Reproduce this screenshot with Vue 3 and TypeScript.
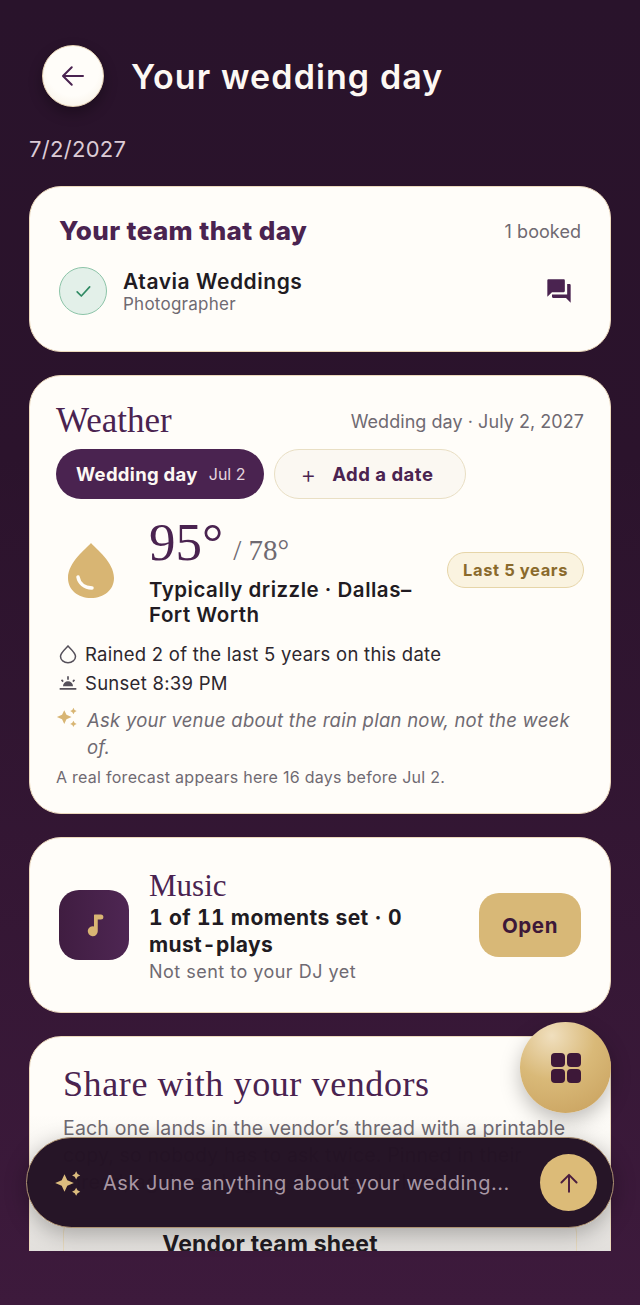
<script setup lang="ts">
const details = [
  { id: 'rain', text: 'Rained 2 of the last 5 years on this date' },
  { id: 'sunset', text: 'Sunset 8:39 PM' },
]
</script>

<template>
  <div class="page">
    <main class="scroller">
      <header class="top">
        <button class="back" aria-label="Back">
          <svg width="30" height="30" viewBox="0 0 24 24" fill="none" stroke="#4a2350" stroke-width="1.600" stroke-linecap="round" stroke-linejoin="round">
            <path d="M20 12H4.500M11 5l-7 7 7 7" />
          </svg>
        </button>
        <h1>Your wedding day</h1>
      </header>
      <p class="date">7/2/2027</p>

      <section class="card team">
        <div class="row-between">
          <h2>Your team that day</h2>
          <span class="muted booked">1 booked</span>
        </div>
        <div class="vendor">
          <span class="check">
            <svg width="20" height="20" viewBox="0 0 24 24" fill="none" stroke="#2f8a63" stroke-width="2" stroke-linecap="round" stroke-linejoin="round">
              <path d="M5 13l5 5L20 7" />
            </svg>
          </span>
          <div class="vendor-text">
            <strong>Atavia Weddings</strong>
            <span class="muted">Photographer</span>
          </div>
          <svg class="chat" width="28" height="28" viewBox="0 0 24 24" fill="#4a2350">
            <path d="M21 6h-2v9H6v2c0 .55.45 1 1 1h11l4 4V7c0-.55-.45-1-1-1zm-4 6V3c0-.55-.45-1-1-1H3c-.55 0-1 .45-1 1v14l4-4h10c.55 0 1-.45 1-1z" />
          </svg>
        </div>
      </section>

      <section class="card weather">
        <div class="row-between weather-head">
          <h3 class="serif">Weather</h3>
          <span class="muted when">Wedding day · July 2, 2027</span>
        </div>
        <div class="chips">
          <span class="chip active"><b>Wedding day</b><small>Jul 2</small></span>
          <span class="chip add"><i>+</i><b>Add a date</b></span>
        </div>
        <div class="forecast">
          <svg class="drop" width="60" height="60" viewBox="0 0 60 60">
            <path d="M30 3C25 9 7 22 7 38c0 12 10 20 23 20s23-8 23-20C53 22 35 9 30 3z" fill="#d8b573" />
            <path d="M17 37c1 6 6 10.500 14 11" fill="none" stroke="#fffdf9" stroke-width="3.500" stroke-linecap="round" />
          </svg>
          <div class="temps">
            <div class="temp-line"><span class="high serif">95°</span><span class="low serif">/ 78°</span></div>
            <p class="summary">Typically drizzle · Dallas–Fort Worth</p>
          </div>
          <span class="pill">Last 5 years</span>
        </div>
        <ul class="facts">
          <li v-for="d in details" :key="d.id">
            <svg v-if="d.id === 'rain'" width="20" height="20" viewBox="0 0 24 24" fill="none" stroke="#55505a" stroke-width="1.800">
              <path d="M12 2.500c-2 2.500-9 8-9 12.500a9 7.500 0 0 0 18 0c0-4.500-7-10-9-12.500z" />
            </svg>
            <svg v-else width="20" height="20" viewBox="0 0 24 24" fill="#55505a">
              <path d="M6 16a6 6 0 0 1 12 0zM2 18h20v2H2zM11 4h2v4h-2zM3.500 9l1.400-1.400 2 2L5.500 11zM20.500 9l-1.400-1.400-2 2 1.400 1.400z" />
            </svg>
            <span>{{ d.text }}</span>
          </li>
        </ul>
        <div class="tip">
          <svg width="22" height="22" viewBox="0 0 24 24" fill="#d8b573">
            <path d="M9 4.500l2.400 5.100L17 12l-5.600 2.400L9 19.500l-2.400-5.100L1 12l5.600-2.400zM19 2l1.200 2.300 2.300 1.200-2.300 1.200L19 9l-1.200-2.300-2.300-1.200 2.300-1.200zM19 16l1.200 2.300 2.300 1.200-2.300 1.200L19 23l-1.200-2.300-2.300-1.200 2.300-1.200z" />
          </svg>
          <em>Ask your venue about the rain plan now, not the week of.</em>
        </div>
        <p class="muted note">A real forecast appears here 16 days before Jul 2.</p>
      </section>

      <section class="card music">
        <span class="tile">
          <svg width="30" height="30" viewBox="0 0 24 24" fill="#d8b573">
            <path d="M12.500 3.500h5a2 2 0 0 1 0 4H15v9.500a4 4 0 1 1-3-3.900V4a.5.5 0 0 1 .5-.5z" />
          </svg>
        </span>
        <div class="music-text">
          <h3 class="serif">Music</h3>
          <strong>1 of 11 moments set · 0 must-plays</strong>
          <span class="muted">Not sent to your DJ yet</span>
        </div>
        <button class="open">Open</button>
      </section>

      <section class="card share">
        <h3 class="serif">Share with your vendors</h3>
        <p>Each one lands in the vendor’s thread with a printable copy, so nobody has to ask twice. Pinned in their thread, again and again, for the whole team.</p>
        <div class="sheet">Vendor team sheet</div>
      </section>
    </main>

    <button class="fab" aria-label="Menu">
      <span class="grid"><i /><i /><i /><i /></span>
    </button>

    <div class="ask">
      <svg width="28" height="28" viewBox="0 0 24 24" fill="#dcbc7e">
        <path d="M9 4.500l2.400 5.100L17 12l-5.600 2.400L9 19.500l-2.400-5.100L1 12l5.600-2.400zM19 2l1.200 2.300 2.300 1.200-2.300 1.200L19 9l-1.200-2.300-2.300-1.200 2.300-1.200zM19 16l1.200 2.300 2.300 1.200-2.300 1.200L19 23l-1.200-2.300-2.300-1.200 2.300-1.200z" />
      </svg>
      <span class="placeholder">Ask June anything about your wedding...</span>
      <button class="send" aria-label="Send">
        <svg width="26" height="26" viewBox="0 0 24 24" fill="none" stroke="#4a1d3f" stroke-width="1.800" stroke-linecap="round" stroke-linejoin="round">
          <path d="M12 20V4.500M5 11.500l7-7 7 7" />
        </svg>
      </button>
    </div>
  </div>
</template>

<style scoped>
.page {
  position: relative;
  width: 640px;
  height: 1305px;
  overflow: hidden;
  background: linear-gradient(180deg, #29132b 0%, #2b132c 35%, #3d1a3c 100%);
  font-family: Inter, "Liberation Sans", sans-serif;
  color: #211b22;
}

.scroller {
  height: 1251px;
  overflow: hidden;
  padding: 45px 29px 0;
  box-sizing: border-box;
}

.top {
  display: flex;
  align-items: center;
  gap: 28px;
  padding-left: 13px;
}

.back {
  width: 62px;
  height: 62px;
  border-radius: 50%;
  border: 1px solid #e8d6b8;
  background: radial-gradient(circle at 50% 40%, #fffdf9 55%, #f6eee0 100%);
  box-shadow: 0 6px 14px rgba(0, 0, 0, 0.3);
  display: flex;
  align-items: center;
  justify-content: center;
  padding: 0;
}

h1 {
  margin: 0 0 0 -1px;
  font-size: 34px;
  font-weight: 600;
  color: #fdf8f3;
  letter-spacing: 1.1px;
}

.date {
  margin: 27px 0 22px;
  font-size: 22px;
  line-height: 30px;
  color: #dccbd6;
  letter-spacing: 0.3px;
}

.card {
  background: #fffdf9;
  border: 1.500px solid #ecd9bd;
  border-radius: 32px;
  box-sizing: border-box;
  margin-bottom: 23px;
}

.muted {
  color: #6f6a72;
}

.serif {
  font-family: "Liberation Serif", "DejaVu Serif", serif;
  font-weight: 400;
  color: #4a2350;
  margin: 0;
}

.row-between {
  display: flex;
  align-items: center;
  justify-content: space-between;
}

.team {
  height: 166px;
  padding: 26px 29px 0;
}

h2 {
  margin: 0;
  font-size: 26px;
  font-weight: 800;
  color: #4a2350;
  line-height: 36px;
  letter-spacing: 0.4px;
}

.booked {
  font-size: 18px;
  letter-spacing: 0.05px;
}

.vendor {
  display: flex;
  align-items: center;
  margin-top: 18px;
}

.check {
  width: 48px;
  height: 48px;
  box-sizing: border-box;
  border-radius: 50%;
  border: 1px solid #8cc4a8;
  background: #e3f0e9;
  display: flex;
  align-items: center;
  justify-content: center;
  margin-right: 16px;
}

.vendor-text {
  display: flex;
  flex-direction: column;
  flex: 1;
}

.vendor-text strong {
  font-size: 21px;
  font-weight: 600;
  line-height: 25px;
  letter-spacing: 0.55px;
  padding-top: 2px;
}

.vendor-text .muted {
  font-size: 17px;
  line-height: 21px;
  letter-spacing: 0.25px;
}

.chat {
  margin-right: 8px;
}

.weather {
  height: 439px;
  padding: 22px 26px 0;
}

.weather-head h3 {
  font-size: 35px;
  line-height: 46px;
}

.when {
  font-size: 18px;
  letter-spacing: 0.05px;
}

.chips {
  display: flex;
  gap: 10px;
  margin-top: 5px;
}

.chip {
  height: 50px;
  box-sizing: border-box;
  border-radius: 25px;
  display: inline-flex;
  align-items: center;
  font-size: 18.500px;
}

.chip.active {
  background: #4a2350;
  color: #fdf8f3;
  padding: 0 19px 0 20px;
  gap: 11px;
}

.chip.active b {
  letter-spacing: 0.3px;
}

.chip.active small {
  font-size: 16px;
  color: #e4d6df;
}

.chip.add {
  background: #fbf8f2;
  border: 1px solid #e9dfc4;
  color: #4a2350;
  padding: 0 32px 0 25px;
  gap: 16px;
}

.chip.add b {
  letter-spacing: 0.5px;
}

.chip.add i {
  font-style: normal;
  font-size: 24px;
  font-weight: 300;
}

.chip b {
  font-weight: 700;
}

.forecast {
  display: flex;
  align-items: center;
  margin-top: 14px;
}

.drop {
  flex: none;
  margin: 0 28px 0 5px;
}

.temps {
  width: 280px;
}

.temp-line {
  display: flex;
  align-items: baseline;
  gap: 10px;
  height: 58px;
}

.high {
  font-size: 53px;
  line-height: 58px;
}

.low {
  font-size: 29px;
  color: #6f6a72;
}

.summary {
  margin: 6px 0 0;
  font-size: 20.500px;
  line-height: 25px;
  font-weight: 600;
  letter-spacing: 0.5px;
}

.pill {
  flex: none;
  margin: 0 0 0 auto;
  height: 36px;
  padding: 0 15px;
  box-sizing: border-box;
  border-radius: 18px;
  border: 1px solid #e6d5a8;
  background: #faf3e0;
  color: #8a6a2c;
  font-size: 16.500px;
  font-weight: 700;
  line-height: 34px;
  letter-spacing: 0.6px;
}

.facts {
  list-style: none;
  margin: 12px 0 0;
  padding: 0;
}

.facts li {
  display: flex;
  align-items: center;
  gap: 7px;
  height: 29px;
  font-size: 18.500px;
  color: #2d272e;
  letter-spacing: 0.27px;
  padding-left: 2px;
}

.tip {
  display: flex;
  gap: 9px;
  margin-top: 10px;
  font-size: 18.500px;
  line-height: 27px;
  color: #6f6a72;
  letter-spacing: 0.25px;
}

.tip svg {
  flex: none;
  margin-top: -1px;
}

.note {
  margin: 5px 0 0;
  font-size: 16px;
  line-height: 22px;
  letter-spacing: 0.27px;
}

.music {
  height: 176px;
  display: flex;
  align-items: center;
  padding: 0 29px;
}

.tile {
  flex: none;
  width: 70px;
  height: 70px;
  border-radius: 20px;
  background: linear-gradient(90deg, #401d41, #4e2653);
  display: flex;
  align-items: center;
  justify-content: center;
  margin-right: 20px;
}

.music-text {
  flex: 1;
  display: flex;
  flex-direction: column;
  padding-top: 4px;
}

.music-text h3 {
  font-size: 31px;
  line-height: 36px;
}

.music-text strong {
  font-size: 21px;
  line-height: 27px;
  font-weight: 700;
  font-feature-settings: "tnum";
  letter-spacing: 0.37px;
  padding-right: 18px;
}

.music-text .muted {
  font-size: 18px;
  line-height: 28px;
  letter-spacing: 0.48px;
}

.open {
  flex: none;
  width: 102px;
  height: 64px;
  border: 0;
  border-radius: 20px;
  background: #d8b877;
  color: #3d1838;
  font-family: inherit;
  font-size: 20.500px;
  font-weight: 700;
  letter-spacing: 0.6px;
  margin-left: 18px;
}

.share {
  padding: 26px 33px 0;
  height: 260px;
  background: linear-gradient(180deg, #fffdf9 30%, #d9d6d3 100%);
}

.share h3 {
  font-size: 36px;
  line-height: 42px;
  letter-spacing: 0.6px;
}

.share p {
  margin: 10px 0 0;
  font-size: 19.500px;
  line-height: 27px;
  color: #6f6a72;
  letter-spacing: 0.17px;
}

.sheet {
  margin-top: 22px;
  height: 60px;
  border: 1px solid #e5d8bd;
  border-radius: 14px;
  padding-right: 100px;
  text-align: center;
  font-size: 23px;
  font-weight: 700;
  letter-spacing: 0.2px;
  line-height: 50px;
}

.fab {
  position: absolute;
  left: 520px;
  top: 1022px;
  width: 91px;
  height: 91px;
  border: 0;
  border-radius: 50%;
  padding: 0;
  background: radial-gradient(circle at 35% 15%, #f0dfbe 0%, #d9b978 45%, #c79f5c 100%);
  box-shadow: 0 8px 20px rgba(0, 0, 0, 0.25);
  display: flex;
  align-items: center;
  justify-content: center;
}

.grid {
  display: grid;
  grid-template-columns: 14px 14px;
  gap: 2px;
}

.grid i {
  width: 14px;
  height: 14px;
  border-radius: 4px;
  background: #3d1838;
}

.ask {
  position: absolute;
  left: 26px;
  top: 1137px;
  width: 588px;
  height: 91px;
  box-sizing: border-box;
  border-radius: 46px;
  border: 1px solid #ad9272;
  background: rgba(35, 17, 36, 0.985);
  box-shadow: 0 6px 22px rgba(0, 0, 0, 0.28);
  display: flex;
  align-items: center;
  padding: 0 16px 0 27px;
}

.placeholder {
  flex: 1;
  margin-left: 21px;
  font-size: 20px;
  color: #a897a4;
  letter-spacing: 0.53px;
}

.send {
  width: 57px;
  height: 57px;
  border: 0;
  border-radius: 50%;
  background: #dcbb78;
  padding: 0;
  display: flex;
  align-items: center;
  justify-content: center;
}
</style>
